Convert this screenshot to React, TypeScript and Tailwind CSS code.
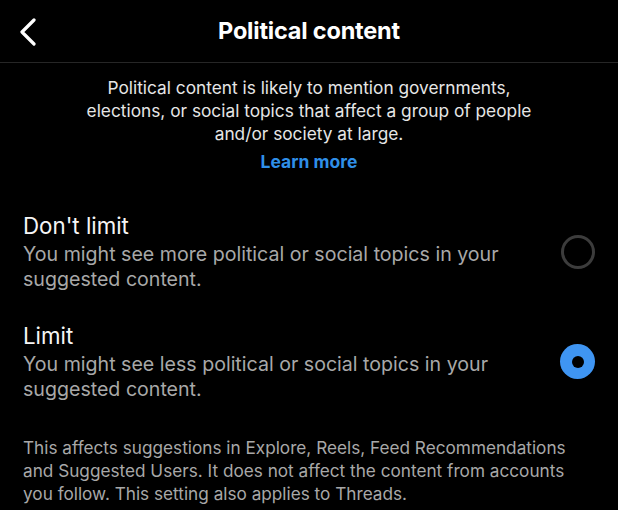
import { useState } from "react";

const font = { fontFamily: "Inter, 'Liberation Sans', sans-serif" };

const options = [
  {
    id: "none",
    title: "Don't limit",
    text: ["You might see more political or social topics in your", "suggested content."],
  },
  {
    id: "limit",
    title: "Limit",
    text: ["You might see less political or social topics in your", "suggested content."],
  },
];

function Radio({ checked }: { checked: boolean }) {
  return checked ? (
    <div className="w-[35px] h-[35px] rounded-full bg-[#3f95f2] flex items-center justify-center shrink-0">
      <div className="w-[12px] h-[12px] rounded-full bg-black" />
    </div>
  ) : (
    <div className="w-[34px] h-[34px] rounded-full border-[3px] border-[#3c3c3c] shrink-0" />
  );
}

export default function App() {
  const [selected, setSelected] = useState("limit");

  return (
    <div className="w-[618px] h-[510px] bg-black text-white overflow-hidden" style={font}>
      {/* Header */}
      <div className="h-[63px] border-b border-[#262626] flex items-center relative">
        <svg className="absolute left-[18px] top-[18px]" width="20" height="28" viewBox="0 0 20 28" fill="none">
          <path d="M16 2 L4 14 L16 26" stroke="white" strokeWidth="3.2" strokeLinecap="round" strokeLinejoin="round" />
        </svg>
        <h1 className="w-full text-center text-[23.5px] font-bold tracking-[-0.2px] text-white">Political content</h1>
      </div>

      {/* Intro */}
      <div className="pt-[13px] text-center">
        <p className="text-[17.3px] leading-[23px] text-[#e6e6e6]">
          Political content is likely to mention governments,
          <br />
          elections, or social topics that affect a group of people
          <br />
          and/or society at large.
        </p>
        <p className="mt-[6px] text-[17.5px] leading-[22px] font-bold text-[#2f8fe8]">Learn more</p>
      </div>

      {/* Options */}
      <div className="mt-[39px] flex flex-col gap-[31px] pl-[23px] pr-[23px]">
        {options.map((opt) => (
          <div key={opt.id} className="flex items-center justify-between" onClick={() => setSelected(opt.id)}>
            <div>
              <p className="text-[22.3px] leading-[28px] text-[#f5f5f5]">{opt.title}</p>
              <p className="mt-[2px] text-[19.6px] leading-[24.5px] text-[#a8a8a8]">
                {opt.text[0]}
                <br />
                {opt.text[1]}
              </p>
            </div>
            <Radio checked={selected === opt.id} />
          </div>
        ))}
      </div>

      {/* Footer note */}
      <p className="mt-[35px] px-[23px] text-[17.2px] leading-[23px] text-[#a8a8a8]">
        This affects suggestions in Explore, Reels, Feed Recommendations
        <br />
        and Suggested Users. It does not affect the content from accounts
        <br />
        you follow. This setting also applies to Threads.
      </p>
    </div>
  );
}
